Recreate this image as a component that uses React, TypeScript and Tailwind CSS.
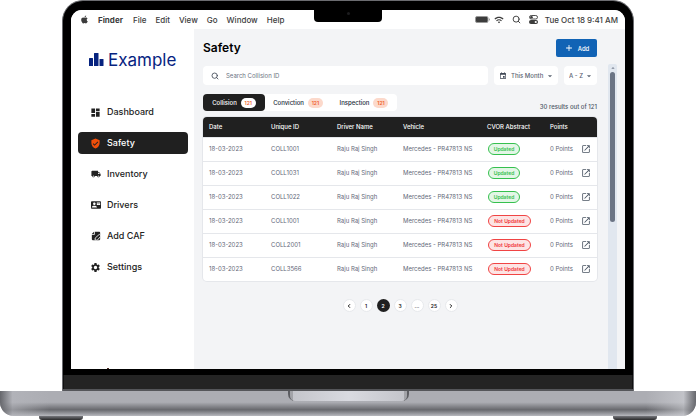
import { FaApple } from "react-icons/fa";
import {
  MdAdd,
  MdArrowDropDown,
  MdArrowDropUp,
  MdContactMail,
  MdDashboard,
  MdEvent,
  MdLocalShipping,
  MdOpenInNew,
  MdSettings,
  MdVerifiedUser,
  MdWifi,
} from "react-icons/md";
import { ChevronLeft, ChevronRight, Search } from "lucide-react";
import type { ReactNode } from "react";

const menus = ["File", "Edit", "View", "Go", "Window", "Help"];

function NoteEditIcon() {
  return (
    <svg viewBox="0 0 24 24" className="size-[10px]" fill="currentColor" aria-hidden="true">
      <path d="M9 2h11a2 2 0 0 1 2 2v16a2 2 0 0 1-2 2H4a2 2 0 0 1-2-2V9h7z" />
      <path d="M7 2v5H2z" />
      <path d="M20 8l4 4-9 10h-5v-5z" fill="#222" stroke="#fff" strokeWidth="2" />
    </svg>
  );
}

const nav: { label: string; icon: ReactNode }[] = [
  { label: "Dashboard", icon: <MdDashboard className="size-[11px]" /> },
  { label: "Safety", icon: <MdVerifiedUser className="size-[11px] text-[#f04f0a]" /> },
  { label: "Inventory", icon: <MdLocalShipping className="size-[10px]" /> },
  { label: "Drivers", icon: <MdContactMail className="size-[10px]" /> },
  { label: "Add CAF", icon: <NoteEditIcon /> },
  { label: "Settings", icon: <MdSettings className="size-[11px]" /> },
];

const tabs = ["Collision", "Conviction", "Inspection"];

const rows = [
  { id: "COLL1001", updated: true },
  { id: "COLL1031", updated: true },
  { id: "COLL1022", updated: true },
  { id: "COLL1001", updated: false },
  { id: "COLL2001", updated: false },
  { id: "COLL3566", updated: false },
];

function MenuBar() {
  return (
    <header className="relative flex h-[19px] shrink-0 items-center bg-white pr-[7px] pl-[9px] text-[8px] leading-[10px] font-medium text-[#3c3c3c]">
      <FaApple className="mr-[9px] size-[9px]" />
      <span className="mr-[10px] font-bold">Finder</span>
      <nav className="flex gap-[9px]">
        {menus.map((m) => (
          <button key={m}>{m}</button>
        ))}
      </nav>
      <div className="absolute -top-px left-1/2 h-[13px] w-[68px] -translate-x-1/2 rounded-b-[4px] bg-black">
        <span className="mx-auto mt-[3px] block size-[3px] rounded-full bg-[#1c1c1e]" />
      </div>
      <div className="ml-auto flex items-center">
        <svg viewBox="0 0 15 7" className="mr-[4px] h-[7px] w-[15px]" aria-hidden="true">
          <rect x=".5" y=".5" width="12.500" height="6" rx="1.500" fill="#3c3c3c" stroke="#999" />
          <path d="M14 2.300v2.400c1-.3 1-2.100 0-2.400z" fill="#777" />
        </svg>
        <MdWifi className="mr-[8px] size-[10px]" />
        <Search className="mr-[8px] size-[9px]" strokeWidth={2.5} />
        <svg viewBox="0 0 18 18" className="mr-[7px] size-[9px]" aria-hidden="true">
          <rect x="1" y="1" width="16" height="7" rx="3.500" fill="none" stroke="#3c3c3c" strokeWidth="1.800" />
          <circle cx="5" cy="4.500" r="2.500" fill="#3c3c3c" />
          <rect x="0" y="10" width="18" height="8" rx="4" fill="#3c3c3c" />
          <circle cx="13.500" cy="14" r="2.200" fill="#fff" />
        </svg>
        <span>Tue Oct 18</span>
        <span className="ml-[2px]">9:41 AM</span>
      </div>
    </header>
  );
}

function Sidebar() {
  return (
    <aside className="flex w-[123px] shrink-0 flex-col overflow-hidden bg-white pr-[6px] pl-[7px]">
      <div className="mt-[20px] flex h-[22px] items-center gap-[4px] pl-[11px] text-[#06237f]">
        <svg viewBox="0 0 15 14" className="h-[14px] w-[15px]" fill="currentColor" aria-hidden="true">
          <rect x="0" y="5" width="4" height="8" rx=".5" />
          <rect x="5" y="0" width="4.500" height="13" rx=".5" />
          <rect x="10.500" y="6" width="4" height="7" rx=".5" />
        </svg>
        <span className="text-[17px] leading-[22px]">Example</span>
      </div>
      <nav className="mt-[30px] flex flex-col gap-[9px]">
        {nav.map((n) => (
          <a
            key={n.label}
            href="#"
            className={
              n.label === "Safety"
                ? "flex h-[22px] items-center gap-[6px] rounded-[4px] bg-[#202020] pl-[12px] text-[9px] leading-[12px] font-medium text-white"
                : "flex h-[22px] items-center gap-[6px] rounded-[4px] pl-[12px] text-[9px] leading-[12px] font-medium text-[#222]"
            }
          >
            <span className="flex w-[11px] justify-center">{n.icon}</span>
            {n.label}
          </a>
        ))}
      </nav>
      <span className="mt-auto ml-[29px] h-px w-[2px] bg-[#4a2a22]" />
    </aside>
  );
}

function Toolbar() {
  return (
    <>
      <div className="flex h-[18px] items-center justify-between">
        <h1 className="text-[12px] leading-[18px] font-semibold text-black">Safety</h1>
        <button className="flex h-[18px] w-[41px] items-center justify-center gap-[4px] rounded-[2px] bg-[#1163b5] text-[6px] font-medium text-white">
          <MdAdd className="size-[10px]" />
          Add
        </button>
      </div>
      <div className="mt-[9px] flex h-[19px] gap-[6px] text-[6px] leading-[9px] text-[#5b6472]">
        <label className="flex min-w-0 flex-1 items-center gap-[7px] rounded-[4px] bg-white pl-[8px]">
          <Search className="size-[8px] text-[#3f4754]" strokeWidth={2.5} />
          <input
            aria-label="Search Collision ID"
            placeholder="Search Collision ID"
            className="min-w-0 flex-1 bg-transparent outline-none placeholder:text-[#6b7382]"
          />
        </label>
        <label className="flex w-[64px] items-center rounded-[4px] bg-white pr-[3px] pl-[5px] font-medium">
          <MdEvent className="mr-[4px] size-[8px] shrink-0 text-[#3f4754]" />
          <select aria-label="Period" className="min-w-0 flex-1 appearance-none bg-transparent outline-none">
            <option>This Month</option>
          </select>
          <MdArrowDropDown className="size-[10px] shrink-0" />
        </label>
        <label className="flex w-[33px] items-center rounded-[4px] bg-white pr-[3px] pl-[5px] font-medium">
          <select aria-label="Sort order" className="min-w-0 flex-1 appearance-none bg-transparent outline-none">
            <option>A - Z</option>
          </select>
          <MdArrowDropDown className="size-[10px] shrink-0" />
        </label>
      </div>
    </>
  );
}

function Tabs() {
  return (
    <div className="mt-[9px] flex items-end justify-between">
      <div role="tablist" className="flex h-[17px] rounded-[4px] bg-white text-[6px] leading-[8px] font-medium">
        {tabs.map((t, i) => (
          <button
            key={t}
            role="tab"
            aria-selected={i === 0}
            className={
              i === 0
                ? "flex w-[62px] items-center justify-center gap-[4px] rounded-[4px] bg-[#202020] text-white"
                : "flex w-[66px] items-center justify-center gap-[4px] text-[#222b38]"
            }
          >
            {t}
            <span
              className={
                i === 0
                  ? "flex h-[10px] w-[15px] items-center justify-center rounded-full bg-white text-[5px] font-semibold text-[#f0602a]"
                  : "flex h-[10px] w-[15px] items-center justify-center rounded-full bg-[#fcd9cb] text-[5px] font-semibold text-[#f0602a]"
              }
            >
              121
            </span>
          </button>
        ))}
      </div>
      <p className="text-[6px] leading-[8px] font-medium text-[#4b5563]">30 results out of 121</p>
    </div>
  );
}

function CollisionTable() {
  return (
    <div className="mt-[6px] overflow-hidden rounded-[4px] bg-white shadow-[0_0_0_1px_#e5e7eb]">
      <table className="w-full table-fixed text-left text-[6px] leading-[8px] text-[#5f6878]">
        <colgroup>
          <col className="w-[62px]" />
          <col className="w-[66px]" />
          <col className="w-[66px]" />
          <col className="w-[84px]" />
          <col className="w-[63px]" />
          <col className="w-[34px]" />
          <col className="w-[19px]" />
        </colgroup>
        <thead className="bg-[#202020] text-white">
          <tr className="h-[20px]">
            {["Date", "Unique ID", "Driver Name", "Vehicle", "CVOR Abstract", "Points"].map((h) => (
              <th key={h} className="pl-[6px] font-medium whitespace-nowrap">
                {h}
              </th>
            ))}
            <th aria-label="Open" />
          </tr>
        </thead>
        <tbody>
          {rows.map((r, i) => (
            <tr key={i} className="h-[24px] border-t border-[#e5e7eb] whitespace-nowrap">
              <td className="pl-[6px]">18-03-2023</td>
              <td className="pl-[6px]">{r.id}</td>
              <td className="pl-[6px]">Raju Raj Singh</td>
              <td className="pl-[6px]">Mercedes - PR47813 NS</td>
              <td className="pl-[7px]">
                <span
                  className={
                    r.updated
                      ? "flex h-[12px] w-[32px] items-center justify-center rounded-full border border-[#35c04e] bg-[#e3f6e6] text-[5px] font-semibold text-[#35c04e]"
                      : "flex h-[12px] w-[43px] items-center justify-center rounded-full border border-[#f04444] bg-[#fde4e4] text-[5px] font-semibold text-[#f03535]"
                  }
                >
                  {r.updated ? "Updated" : "Not Updated"}
                </span>
              </td>
              <td className="pl-[6px]">0 Points</td>
              <td className="pl-[3px]">
                <button aria-label="Open record" className="block">
                  <MdOpenInNew className="size-[10px] text-[#4b5563]" />
                </button>
              </td>
            </tr>
          ))}
        </tbody>
      </table>
    </div>
  );
}

function Pagination() {
  const pages: ReactNode[] = [
    <ChevronLeft key="prev" className="size-[6px]" strokeWidth={4} />,
    "1",
    "2",
    "3",
    "...",
    "25",
    <ChevronRight key="next" className="size-[6px]" strokeWidth={4} />,
  ];
  return (
    <nav aria-label="Pages" className="mt-[18px] flex justify-center gap-[4px] text-[5px] leading-[8px] font-semibold">
      {pages.map((p, i) => (
        <button
          key={i}
          className={
            p === "2"
              ? "flex size-[13px] items-center justify-center rounded-full bg-[#202020] text-white"
              : "flex size-[13px] items-center justify-center rounded-full border border-[#e7e9ec] bg-white text-[#202020]"
          }
        >
          {p}
        </button>
      ))}
    </nav>
  );
}

function Foot() {
  return <div className="h-[4px] w-[44px] rounded-b-[3px] bg-linear-to-b from-[#77787d] to-[#2b2b2d]" />;
}

export default function App() {
  return (
    <div className="flex min-h-screen flex-col bg-white font-['Inter',sans-serif]">
      <div className="mx-[62px] flex flex-1 flex-col rounded-t-[21px] border border-b-0 border-[#6b6c70] bg-black">
        <div className="mx-[8px] mt-[9px] flex flex-1 flex-col overflow-hidden rounded-t-[11px] bg-white">
          <MenuBar />
          <div className="flex flex-1">
            <Sidebar />
            <div className="flex min-w-0 flex-1 bg-[#f3f4f6] pr-[8px] pl-[9px]">
              <main className="mr-[11px] min-w-0 flex-1 pt-[10px]">
                <Toolbar />
                <Tabs />
                <CollisionTable />
                <Pagination />
              </main>
              <div className="mt-[35px] flex w-[9px] flex-col items-center rounded-t-[2px] bg-[#e1e7ef]">
                <MdArrowDropUp className="size-[8px] text-[#7b8494]" />
                <div className="h-[150px] w-[5px] rounded-full bg-[#6b7484]" />
              </div>
            </div>
          </div>
        </div>
        <div className="mt-[6px] h-[14px] border-x border-[#111] bg-[#242424]" />
        <div className="h-[2px] bg-[#55565a]" />
      </div>
      <div className="relative h-[25px] overflow-hidden rounded-b-[14px] bg-linear-to-b from-[#acadb3] from-45% via-[#68696e] via-75% to-[#b8b9bf]">
        <div className="absolute inset-y-0 left-0 w-[50px] bg-linear-to-r from-[#66676c] via-[#b5b6bc]/60 via-25% to-transparent" />
        <div className="absolute inset-y-0 right-0 w-[50px] bg-linear-to-l from-[#66676c] via-[#d0d1d6]/60 via-25% to-transparent" />
        <div className="mx-auto h-[10px] w-[121px] overflow-hidden rounded-b-[7px] bg-[#5c5d62] px-[2px]">
          <div className="h-full rounded-b-[5px] bg-[#a2a3a8] px-[3px]">
            <div className="h-full bg-linear-to-r from-[#c4c5cb] via-[#d9dae0] to-[#c4c5cb]" />
          </div>
        </div>
      </div>
      <div className="flex h-[4px] justify-between px-[39px]">
        <Foot />
        <Foot />
      </div>
    </div>
  );
}
